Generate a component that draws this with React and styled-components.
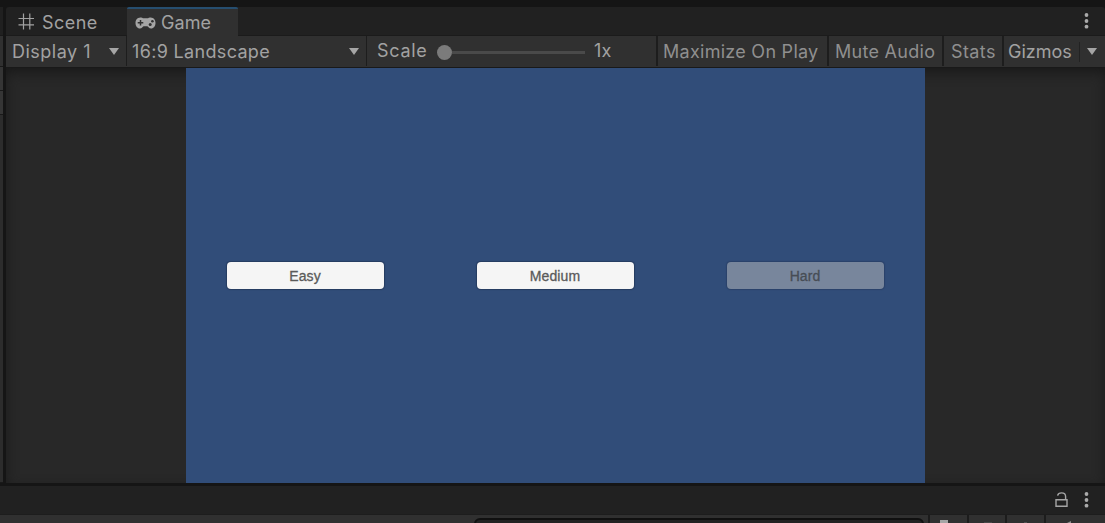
import React from "react";
import styled, { createGlobalStyle } from "styled-components";

const GlobalStyle = createGlobalStyle`
  * { box-sizing: border-box; }
  body { margin: 0; background: #151515; overflow: hidden; }
`;

const Editor = styled.div`
  width: 1105px;
  height: 523px;
  display: flex;
  flex-direction: column;
  background: #151515;
  color: #a2a2a2;
  font: 400 18px/22px Inter, "Liberation Sans", sans-serif;
  white-space: nowrap;
  overflow: hidden;
`;

const TopStrip = styled.div`
  height: 7px;
  flex: none;
`;

const Workspace = styled.div`
  display: flex;
  height: 476px;
  flex: none;
`;

const SidePanel = styled.div`
  width: 3px;
  margin-right: 3px;
  display: flex;
  flex-direction: column;
`;

const SideSegment = styled.div`
  height: ${(p) => p.$height}px;
  background: ${(p) => p.$color};
  border-bottom: 1px solid #191919;
`;

const GamePanel = styled.section`
  flex: 1;
  display: flex;
  flex-direction: column;
  min-width: 0;
`;

const TabBar = styled.div`
  height: 29px;
  display: flex;
  background: #212121;
  border-radius: 3px 3px 0 0;
  border-bottom: 1px solid #1b1b1b;
`;

const Tab = styled.div`
  display: flex;
  align-items: center;
  width: ${(p) => p.$width}px;
  height: 29px;
  padding: ${(p) => (p.$active ? "1px 0 0 8px" : "3px 0 0 12px")};
  gap: ${(p) => (p.$active ? 5 : 7)}px;
  background: ${(p) => (p.$active ? "#303030" : "transparent")};
  border-top: ${(p) => (p.$active ? "2px solid #264e70" : "0")};
  border-radius: 2px 2px 0 0;
`;

const TabLabel = styled.span`
  letter-spacing: ${(p) => p.$spacing}px;
`;

const TabMenu = styled.div`
  margin: 6px 16px 0 auto;
`;

const Toolbar = styled.div`
  height: 32px;
  display: flex;
  background: #303030;
  border-bottom: 1px solid #191919;
`;

const ToolItem = styled.div`
  width: ${(p) => p.$width}px;
  height: 30px;
  flex: none;
  display: flex;
  align-items: center;
  padding-left: ${(p) => p.$pad}px;
  padding-right: ${(p) => p.$end || 0}px;
  padding-top: 1px;
  justify-content: space-between;
  border-right: ${(p) => (p.$last ? 0 : p.$line || 1)}px solid #1d1d1d;
  letter-spacing: ${(p) => p.$spacing}px;
  color: ${(p) => (p.$dim ? "#8f8f8f" : "#a2a2a2")};
`;

const Caret = styled.i`
  width: 0;
  height: 0;
  border: solid transparent;
  border-width: 7px 5.5px 0;
  border-top-color: #a5a5a5;
`;

const CaretSlot = styled.span`
  height: 20px;
  display: flex;
  align-items: center;
  border-left: 1px solid #222;
  padding-left: 7px;
`;

const ScaleControl = styled.div`
  width: 291px;
  height: 30px;
  flex: none;
  display: flex;
  align-items: center;
  padding-left: 10px;
  border-right: 2px solid #1d1d1d;
`;

const ScaleLabel = styled.span`
  width: ${(p) => p.$width}px;
  letter-spacing: ${(p) => p.$spacing}px;
`;

const Slider = styled.div`
  width: 148px;
  height: 16px;
  margin: 2px 9px 0 0;
  display: flex;
  align-items: center;
`;

const Knob = styled.div`
  width: 15px;
  height: 15px;
  border-radius: 50%;
  background: #7b7b7b;
`;

const Track = styled.div`
  flex: 1;
  height: 3px;
  background: #4a4a4a;
`;

const Viewport = styled.div`
  height: 415px;
  padding-left: 180px;
  background: #282828;
  box-shadow: inset 0 5px 14px -2px #171717;
`;

const GameCanvas = styled.div`
  width: 739px;
  height: 415px;
  padding: 194px 41px 0;
  display: flex;
  align-items: flex-start;
  justify-content: space-between;
  background: #314d79;
`;

const GameButton = styled.button`
  width: 157px;
  height: 27px;
  padding: 0 1px 0 0;
  border: 0;
  border-radius: 4px;
  background: ${(p) => (p.disabled ? "#78869c" : "#f5f5f5")};
  color: ${(p) => (p.disabled ? "#474d55" : "#5a5a5a")};
  box-shadow: 0 0 1px 0.5px ${(p) => (p.disabled ? "#2b426a" : "#263c60")};
  font: 400 14px/20px "Liberation Sans", Arial, sans-serif;
  letter-spacing: 0.1px;
  -webkit-text-stroke: 0.3px currentColor;
`;

const PanelHeader = styled.div`
  height: 29px;
  flex: none;
  margin-top: 3px;
  display: flex;
  justify-content: flex-end;
  gap: 16px;
  padding: 6px 16px 0 0;
  background: #212121;
  border-bottom: 1px solid #1d1d1d;
`;

const PanelToolbar = styled.div`
  height: 8px;
  flex: none;
  display: flex;
  padding-left: 474px;
  background: #303030;
  overflow: hidden;
`;

const SearchField = styled.div`
  width: 450px;
  height: 20px;
  margin: 3px 4px 0 0;
  border: 2px solid #101010;
  border-radius: 6px;
  background: #222;
`;

const IconCell = styled.div`
  width: ${(p) => p.$width}px;
  height: 8px;
  border-left: 2px solid #1c1c1c;
`;

const Svg = styled.svg`
  display: block;
  flex: none;
`;

const RaisedSvg = styled(Svg)`
  margin-top: -3px;
`;

function GridIcon() {
  return (
    <RaisedSvg width="17" height="17" viewBox="0 0 17 17" stroke="#a2a2a2" strokeWidth="1.2">
      <path d="M5.5 .5v16M11.800 .5v16M.5 5.500h15.500M.5 11.900h15.500" />
    </RaisedSvg>
  );
}

function GamepadIcon() {
  return (
    <Svg width="21" height="12" viewBox="0 0 21 12">
      <path fill="#a5a5a5" d="M5.5.5Q7 .3 8 1.200h5Q14 .3 15.500.5C19 .6 20.500 3 20.500 6s-1.800 5.500-4.400 5.500c-2 0-2.800-2.300-4.100-2.300H9c-1.300 0-2.100 2.300-4.100 2.300C2.300 11.500.5 9 .5 6s1.500-5.400 5-5.500z" />
      <path stroke="#303030" strokeWidth="1.500" d="M5.500 3v5.500M2.700 5.750h5.600" />
      <circle cx="15.200" cy="7.500" r="1.500" fill="#303030" />
      <circle cx="17.400" cy="4.300" r="1.300" fill="#303030" />
    </Svg>
  );
}

function KebabIcon() {
  return (
    <Svg width="5" height="17" viewBox="0 0 5 17" fill="#aaaaaa">
      <circle cx="2.500" cy="2" r="1.900" />
      <circle cx="2.500" cy="8" r="1.900" />
      <circle cx="2.500" cy="13.700" r="1.900" />
    </Svg>
  );
}

function UnlockIcon() {
  return (
    <Svg width="13" height="17" viewBox="0 0 13 17" fill="none" stroke="#a5a5a5" strokeWidth="1.400">
      <path d="M1 7.800h11v6.400H1zM2.600 3.600C3 1.700 4.800 .9 6.600 .9S10.600 2 10.600 4.500v3.300" />
    </Svg>
  );
}

export default function App() {
  return (
    <>
      <GlobalStyle />
      <Editor>
        <TopStrip />
        <Workspace>
          <SidePanel>
            <SideSegment $height={29} $color="#202020" />
            <SideSegment $height={31} $color="#303030" />
            <SideSegment $height={24} $color="#353535" />
            <SideSegment $height={24} $color="#353535" />
            <SideSegment $height={368} $color="#2c2c2c" />
          </SidePanel>
          <GamePanel>
            <TabBar>
              <Tab $width={121}>
                <GridIcon />
                <TabLabel $spacing={0.45}>Scene</TabLabel>
              </Tab>
              <Tab $active $width={111}>
                <GamepadIcon />
                <TabLabel $spacing={0.1}>Game</TabLabel>
              </Tab>
              <TabMenu>
                <KebabIcon />
              </TabMenu>
            </TabBar>
            <Toolbar>
              <ToolItem $width={121} $pad={6} $end={7} $spacing={0.5}>
                Display 1<Caret />
              </ToolItem>
              <ToolItem $width={240} $pad={5} $end={7} $spacing={0.33}>
                16:9 Landscape<Caret />
              </ToolItem>
              <ScaleControl>
                <ScaleLabel $width={60} $spacing={0.7}>Scale</ScaleLabel>
                <Slider>
                  <Knob />
                  <Track />
                </Slider>
                <ScaleLabel $spacing={0.3}>1x</ScaleLabel>
              </ScaleControl>
              <ToolItem $width={171} $pad={5} $line={2} $spacing={0.27} $dim>
                Maximize On Play
              </ToolItem>
              <ToolItem $width={115} $pad={6} $line={2} $spacing={0.28} $dim>
                Mute Audio
              </ToolItem>
              <ToolItem $width={60} $pad={7} $line={2} $spacing={0.4} $dim>
                Stats
              </ToolItem>
              <ToolItem $width={101} $pad={4} $end={8} $spacing={0} $last>
                Gizmos
                <CaretSlot>
                  <Caret />
                </CaretSlot>
              </ToolItem>
            </Toolbar>
            <Viewport>
              <GameCanvas>
                <GameButton>Easy</GameButton>
                <GameButton>Medium</GameButton>
                <GameButton disabled>Hard</GameButton>
              </GameCanvas>
            </Viewport>
          </GamePanel>
        </Workspace>
        <PanelHeader>
          <UnlockIcon />
          <KebabIcon />
        </PanelHeader>
        <PanelToolbar>
          <SearchField />
          <IconCell $width={39}>
            <Svg width="30" height="8">
              <path d="M10 5h8v3h-8z" fill="#a5a5a5" />
            </Svg>
          </IconCell>
          <IconCell $width={38}>
            <Svg width="30" height="8">
              <path d="M15 7h8v1h-8z" fill="#484848" />
            </Svg>
          </IconCell>
          <IconCell $width={39}>
            <Svg width="30" height="8">
              <path d="M17 7h3v1h-3z" fill="#505050" />
            </Svg>
          </IconCell>
          <IconCell $width={61}>
            <Svg width="40" height="8">
              <path d="M21 8l4-2v2z" fill="#909090" />
            </Svg>
          </IconCell>
        </PanelToolbar>
      </Editor>
    </>
  );
}
